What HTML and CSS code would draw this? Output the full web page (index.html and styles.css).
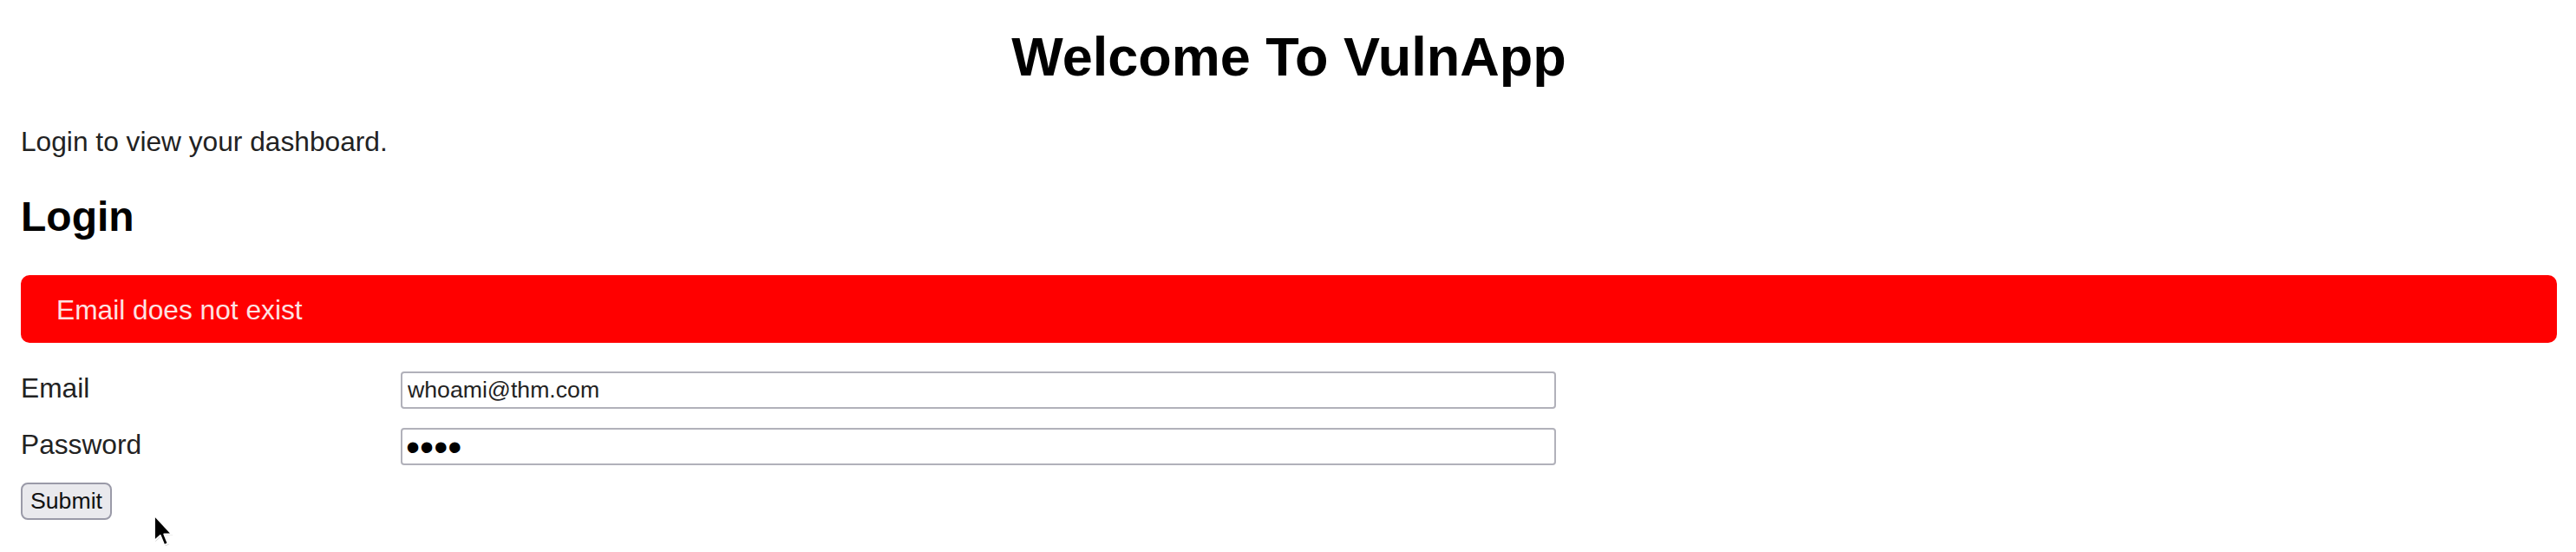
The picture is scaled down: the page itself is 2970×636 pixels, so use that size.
FILE: index.html
```html
<!DOCTYPE html>
<html lang="en">
<head>
<meta charset="utf-8">
<title>VulnApp</title>
<link rel="stylesheet" href="styles.css">
</head>
<body>
<div class="page">
  <h1 class="title">Welcome To VulnApp</h1>
  <p class="intro">Login to view your dashboard.</p>
  <h2 class="section">Login</h2>
  <div class="alert">Email does not exist</div>
  <form class="login">
    <div class="fields">
      <label class="label" for="email">Email</label>
      <input class="field" id="email" type="text" value="whoami@thm.com">
      <label class="label" for="password">Password</label>
      <input class="field field-secret" id="password" type="password" value="abcd">
    </div>
    <button class="submit" type="button">Submit</button>
  </form>
  <svg class="cursor" width="26" height="40" viewBox="0 0 13 20" aria-hidden="true">
    <path d="M1.6 1.6 L1.6 16.1 L5 13 L7.3 18.6 L9.4 17.7 L7.2 12.3 L11.6 12.3 Z" fill="#888" opacity="0.35"/>
    <path d="M1 1 L1 15.5 L4.4 12.4 L6.7 18 L8.8 17.1 L6.6 11.7 L11 11.7 Z" fill="#000" stroke="#fff" stroke-width="0.9" stroke-linejoin="round"/>
  </svg>
</div>
</body>
</html>
```

FILE: styles.css
```css
html, body {
  margin: 0;
  padding: 0;
  background: #ffffff;
}

body {
  font-family: "Liberation Sans", Arial, sans-serif;
  color: #222222;
}

.page {
  position: relative;
  padding: 29px 22px 0 24px;
  height: 636px;
  box-sizing: border-box;
}

.title {
  margin: 0;
  font-size: 63px;
  line-height: 72px;
  font-weight: 700;
  text-align: center;
  color: #000000;
}

.intro {
  margin: 44px 0 0;
  font-size: 31.7px;
  line-height: 36px;
}

.section {
  margin: 41px 0 0;
  font-size: 48px;
  line-height: 55px;
  font-weight: 700;
  color: #000000;
}

.alert {
  margin-top: 40px;
  background: #ff0000;
  color: #fde2e2;
  border-radius: 10px;
  padding: 22px 41px 20px;
  font-size: 31.7px;
  line-height: 36px;
}

.login {
  margin-top: 33px;
}

.fields {
  display: grid;
  grid-template-columns: 438px 1332px;
  row-gap: 22px;
  align-items: start;
}

.label {
  font-size: 31.7px;
  line-height: 36px;
  margin-top: 1px;
}

.field {
  box-sizing: border-box;
  height: 43px;
  margin: 0;
  padding: 0 6px;
  border: 2px solid #b1b1ba;
  border-radius: 4px;
  background: #ffffff;
  font-family: "Liberation Sans", Arial, sans-serif;
  font-size: 26.67px;
  color: #222222;
}

.field-secret {
  font-size: 46px;
  padding: 0 4px;
  color: #000000;
}

.submit {
  display: block;
  margin-top: 20px;
  box-sizing: border-box;
  height: 43px;
  padding: 0 9px;
  border: 2px solid #9a9aa8;
  border-radius: 8px;
  background: #e9e9ed;
  font-family: "Liberation Sans", Arial, sans-serif;
  font-size: 26.67px;
  color: #111111;
}

.cursor {
  position: absolute;
  left: 176px;
  top: 592px;
}
```
